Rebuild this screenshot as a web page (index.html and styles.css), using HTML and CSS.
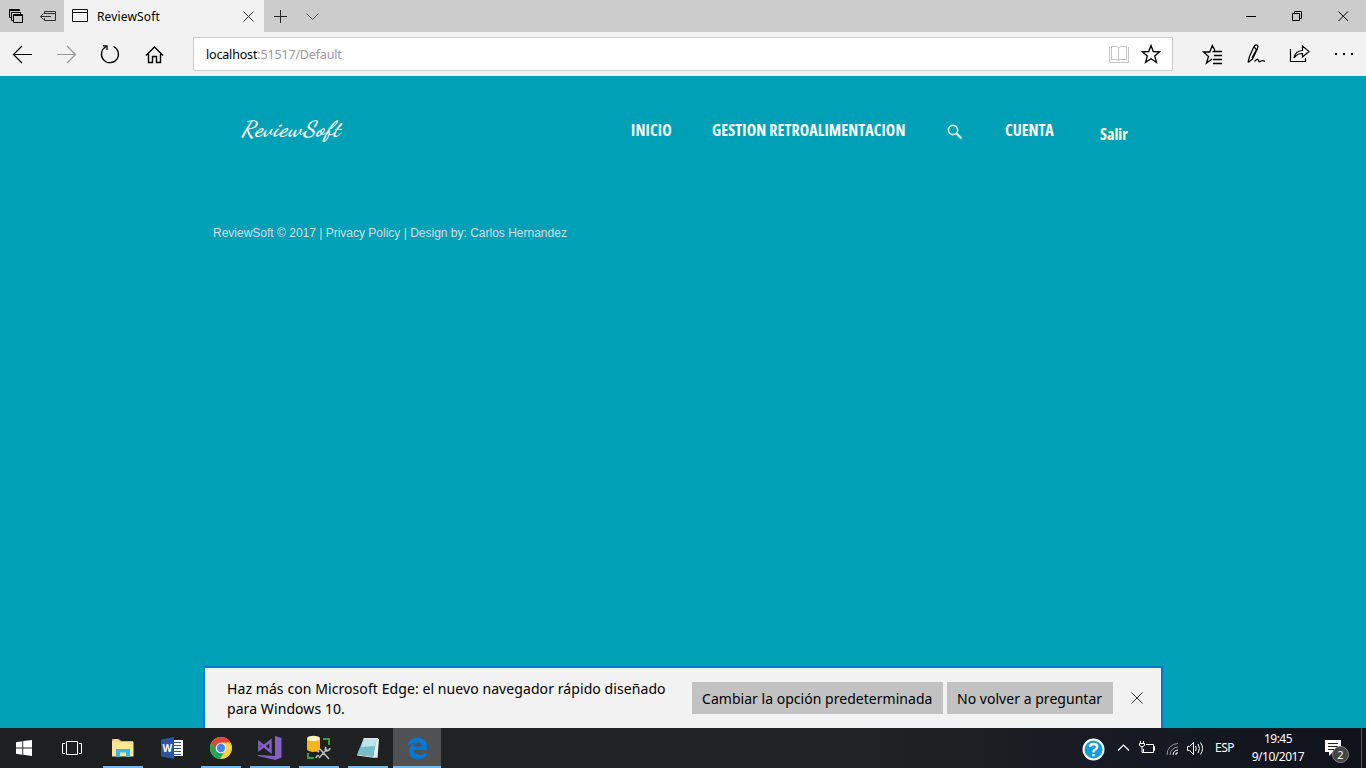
FILE: index.html
```html
<!DOCTYPE html>
<html lang="es">
<head>
<meta charset="utf-8">
<title>ReviewSoft</title>
<link rel="stylesheet" href="styles.css">
</head>
<body>
<div class="screen">
  <div class="titlebar">
    <div class="tab-tools">
      <svg width="64" height="32" fill="none" stroke="#000"><path d="M11 17.500H9.500V9.500H19.500V11M9.500 10.500H19.500M13 20.500H11.500V12.500H20.500V14"/><path d="M13.500 14.500H22.500V22.500H13.500ZM13 15.500H23"/><path stroke="#333" d="M44.500 14V11.500H55.500V20.500H44.500V18M44.500 13.500H55.500M40.500 16.500H51M43.500 13.500L40.500 16.500L43.500 19.500"/></svg>
    </div>
    <div class="tab">
      <svg class="tab-icon" width="17" height="14" fill="none" stroke="#111"><path d="M.5.5H15.500V12.500H.5ZM0 3.500H16"/></svg>
      <span class="tab-title">ReviewSoft</span>
      <svg width="11" height="11" fill="none" stroke="#333"><path d="M.5.5L10.500 10.500M10.500.5L.5 10.500"/></svg>
    </div>
    <svg width="32" height="32" stroke="#222"><path d="M10 16.500H23M16.500 10V23"/></svg>
    <svg width="32" height="32" fill="none" stroke="#555"><path d="M10.500 13.500L16.500 19.500L22.500 13.500"/></svg>
    <div class="window-controls">
      <svg width="46" height="32" stroke="#000"><path d="M18 16.500H28"/></svg>
      <svg width="46" height="32" fill="none" stroke="#000"><path d="M18.500 13.500H25.500V20.500H18.500ZM20.500 13V11.500H27.500V18.500H26"/></svg>
      <svg width="46" height="32" stroke="#000"><path d="M18.500 11.500L28 21M28 11.500L18.500 21"/></svg>
    </div>
  </div>

  <div class="toolbar">
    <div class="nav-buttons">
      <svg width="44" height="44" fill="none" stroke="#000" stroke-width="1.200"><path d="M32 22.500H13.500M22 14L13.500 22.500L22 31"/></svg>
      <svg width="44" height="44" fill="none" stroke="#999" stroke-width="1.200"><path d="M13 22.500H31.500M23 14L31.500 22.500L23 31"/></svg>
      <svg width="44" height="44" fill="none" stroke="#000" stroke-width="1.300"><path d="M25.500 14.500A8.500 8.500 0 1 1 17.800 14.800M15 13.800H19V18"/></svg>
      <svg width="44" height="44" fill="none" stroke="#000" stroke-width="1.400"><path d="M14 23.500L22.500 15L31 23.500M16.500 22V30.500H20.500V24.500H24.500V30.500H28.500V22"/></svg>
    </div>
    <div class="address">
      <span class="url"><b>localhost</b>:51517/Default</span>
      <svg width="20" height="18" fill="none" stroke="#c5c5c5"><path d="M2.500 1.500H7Q9.500 1.500 9.500 3.500Q10 1.500 12 1.500H17.500V14.500H11.500Q9.500 14.500 9.500 16Q9 14.500 7 14.500H2.500ZM9.500 3V16M.5 2V17.500H19.500V2"/></svg>
      <svg class="star" width="20" height="20" fill="none" stroke="#000" stroke-width="1.300"><path d="M10 1.500L12.300 7.500L18.700 7.800L13.700 12L15.500 18.400L10 14.700L4.500 18.400L6.300 12L1.300 7.800L7.700 7.500Z"/></svg>
    </div>
    <div class="tool-buttons">
      <svg width="44" height="44" fill="none" stroke="#000" stroke-width="1.300"><path d="M25 18.500L22.300 13.500L19.700 20H13.500L18.500 24.500L16.500 31L22 27M22.500 19.500H32M24 23.500H32M23 27.500H32M23 31.500H32"/></svg>
      <svg width="44" height="44" fill="none" stroke="#000" stroke-width="1.200"><path d="M14 30.500L15.500 24.500L20 14.500Q22 11.500 24 14L23.300 17L18.500 27L14 30.500M20 15L22.500 17.500L18 26M20.500 29.500Q24 25.800 24.500 28.500Q25 30.800 27 29Q29 28 31 29.500"/></svg>
      <svg width="44" height="44" fill="none" stroke="#000" stroke-width="1.200"><path d="M12.500 17V29.500H27.500V26M12 29.500H28M16 26Q17 19 24.500 18.500V14L31 19.500L24.500 25V21.500Q19 21.500 16 26Z"/></svg>
      <svg width="44" height="44" fill="#000"><path d="M13 21h2v2h-2zM21 21h2v2h-2zM29 21h2v2h-2z"/></svg>
    </div>
  </div>

  <main class="page">
    <header class="site-header">
      <div class="logo">ReviewSoft</div>
      <nav class="site-nav">
        <a class="inicio">INICIO</a>
        <a class="gestion">GESTION RETROALIMENTACION</a>
        <svg class="search" width="16" height="16" fill="none" stroke="#d5f0f4"><circle cx="6" cy="6" r="4.600" stroke-width="1.600"/><path d="M9.300 9.300L14.500 14.500" stroke-width="2.300"/></svg>
        <a class="cuenta">CUENTA</a>
        <a class="salir">Salir</a>
      </nav>
    </header>
    <footer class="site-footer">ReviewSoft © 2017 | Privacy Policy | Design by: Carlos Hernandez</footer>
    <div class="notice">
      <p class="notice-text">Haz más con Microsoft Edge: el nuevo navegador rápido diseñado<br>para Windows 10.</p>
      <span class="btn btn-change">Cambiar la opción predeterminada</span>
      <span class="btn btn-never">No volver a preguntar</span>
      <svg class="notice-close" width="12" height="12" stroke="#333"><path d="M.5.5L11.500 11.500M11.500.5L.5 11.500"/></svg>
    </div>
  </main>

  <div class="taskbar">
    <div class="apps">
      <div class="app"><svg width="48" height="40" fill="#fff"><path d="M16 14.200L22.300 13.300V19.500H16ZM23.200 13.100L32 12V19.500H23.200ZM16 20.400H22.300V26.700L16 25.800ZM23.200 20.400H32V28L23.200 26.800Z"/></svg></div>
      <div class="app"><svg width="48" height="40" fill="none" stroke="#fff"><path d="M18.500 13.500H29.500V26.500H18.500ZM17 15.500H14.500V25.500H17M31 15.500H33.500V25.500H31"/></svg></div>
      <div class="app open"><svg width="48" height="40"><path fill="#e9b83d" d="M13 11H20L22 13H34V16H13Z"/><path fill="#ffe498" d="M13 13H20L22 14H34.500V28.500H13Z"/><path fill="#3bb5e8" d="M17 21H31V29H27V24.500H21V29H17Z"/><path fill="#fff" d="M15 11.500h4v1h-4z"/></svg></div>
      <div class="app"><svg width="48" height="40"><path fill="#fff" d="M24 12H35V28H24Z"/><path stroke="#2b579a" d="M25 14.500H33M25 17.500H33M25 20.500H33M25 23.500H33M25 26.500H33"/><path fill="#2b579a" d="M13 11.500L26 9V31L13 28.500Z"/><text class="word-mark" x="14.500" y="24">W</text></svg></div>
      <div class="app open"><svg width="48" height="40"><circle cx="24" cy="20" r="11" fill="#fdd23e"/><path fill="#e44436" d="M14.400 14.600A11 11 0 0 1 33.600 14.600H24L19 23Z"/><path fill="#20a85a" d="M14.400 14.600A11 11 0 0 0 23 31L28.500 22L24 25L19.300 22.700Z"/><circle cx="24" cy="20" r="5.300" fill="#fff"/><circle cx="24" cy="20" r="4.200" fill="#4385ec"/></svg></div>
      <div class="app open"><svg width="48" height="40" fill="none"><path stroke="#865fc5" stroke-width="2.400" d="M13.300 14.500V21.500L24.500 13V23.500Z"/><path fill="#865fc5" d="M29 8L35.500 10V29.500L29.500 32L12 28V27L29 28Z"/></svg></div>
      <div class="app open"><svg width="48" height="40"><path fill="#f7b51c" d="M12 11V22Q18 26 25 22V11Z"/><ellipse cx="18.500" cy="10.500" rx="6.500" ry="2.700" fill="#fff0be"/><path fill="none" stroke="#3f9c49" stroke-width="2" d="M28 11H34V17M13 25V30H19"/><path fill="none" stroke="#bbb" stroke-width="1.600" d="M24 30L32 21M25 21L34 31M21 22L24 24M31 19Q29 22 32 23Q35 22 35 20M21 30Q22 27 24 28"/></svg></div>
      <div class="app open"><svg width="48" height="40"><path fill="#e8eff0" d="M32 10L35 11L33.500 30L29 29Z"/><path fill="#75bfca" d="M19.500 11L33 10.500L29 29L13 26.500Z"/><path fill="#bce5eb" d="M19.500 11L33 10.500L31 18L17 19Z"/><path stroke="#dce6e8" d="M19.500 10.500L34 10.500M13 27L31 29.500"/></svg></div>
      <div class="app open active"><svg width="48" height="40"><path fill="#0078d7" d="M14 19Q15.500 10 24.500 9.700Q34 10 34 20V22H20.500Q21 26.500 26 26.700Q30 26.700 33 25V29Q29.500 31 25 31Q16.500 31 16 23Q16.500 18 22 14.500Q17 15 14 19ZM20.500 18.500H28.500Q28.500 14.200 24.500 14.200Q21 14.500 20.500 18.500Z"/></svg></div>
    </div>
    <div class="tray">
      <svg width="132" height="40" fill="none" stroke="#fff"><circle cx="13.500" cy="21.500" r="10" fill="#159cdb" stroke-width="2"/><path stroke-width="2.400" d="M10 19Q10 16 13.500 16Q17.200 16 17.200 19Q17 21 14.500 22Q13.500 22.700 13.500 24.500M13.500 26V28.200"/><path stroke-width="1.200" d="M38 22.500L43.500 17L49 22.500"/><path d="M66 16.500H73.500V24.500H63.500V21M74 18.500H74.500V22.500H74M59.500 15.500H64.500V17.500Q62 20.500 59.500 17.500ZM60.500 13V15M63.500 13V15M62 19V24.500H64"/><path stroke="#999" d="M87 27A11 11 0 0 1 98 15.500M90 27A8 8 0 0 1 98 19"/><path d="M93 27A5 5 0 0 1 98 22M96 27V25H98"/><path d="M107.500 18.500H109.500L113.500 14.500V26.500L109.500 22.500H107.500ZM115.500 18Q117 20.500 115.500 23M118 16Q121 20.500 118 25M120.500 14.500Q124.500 20.500 120.500 26.500"/></svg>
      <span class="lang">ESP</span>
      <div class="clock"><span>19:45</span><span>9/10/2017</span></div>
      <div class="action-center">
        <svg width="24" height="28"><path fill="#fff" d="M1 2H17V14H9L5 18V14H1Z"/><path stroke="#222" d="M4 5.500H14M4 8.500H14M4 11.500H10"/></svg>
        <span class="badge">2</span>
      </div>
      <div class="show-desktop"></div>
    </div>
  </div>
</div>
</body>
</html>
```
FILE: styles.css
```css
* { box-sizing: border-box; }
body { margin: 0; overflow: hidden; font-family: "Noto Sans", "Open Sans", sans-serif; }
svg { display: block; flex: none; }
.screen { width: 1366px; height: 768px; display: flex; flex-direction: column; }

.titlebar { height: 32px; display: flex; background: #ccc; }
.tab-tools { width: 64px; }
.tab { width: 200px; display: flex; align-items: center; background: #f2f2f2; padding: 0 10px 0 8px; }
.tab-title { flex: 1; padding-left: 8px; font-size: 12px; letter-spacing: .15px; }
.window-controls { display: flex; margin-left: auto; }

.toolbar { height: 44px; display: flex; background: #f2f2f2; }
.nav-buttons, .tool-buttons { display: flex; }
.address { width: 980px; height: 34px; margin: 5px 17px 0 17px; border: 1px solid #ccc; background: #fff; display: flex; align-items: center; padding: 0 11px 0 12px; white-space: nowrap; }
.url { flex: 1; font-size: 12.500px; letter-spacing: -.17px; color: #999; }
.url b { font-weight: 400; color: #000; }
.star { margin-left: 12px; }

.page { flex: 1; background: #00a0b6; display: flex; flex-direction: column; align-items: center; }
.site-header { width: 940px; height: 110px; padding: 42px 0 0 28px; display: flex; color: #fff; white-space: nowrap; }
.logo { width: 390px; font: italic bold 22px/22px "Dancing Script", "Z003", "URW Chancery L", cursive; letter-spacing: .9px; }
.site-nav { display: flex; font: bold 16px/24px "Open Sans", sans-serif; font-stretch: 75%; }
.inicio { width: 81px; letter-spacing: .15px; }
.gestion { width: 235px; letter-spacing: .1px; }
.search { margin-top: 6px; }
.cuenta { width: 95px; margin-left: 42px; }
.salir { color: #ffc; padding-top: 4px; }
.site-footer { width: 940px; padding-top: 40px; font: 12px/14px "Liberation Sans", Arial, sans-serif; color: #d8dddf; }
.notice { width: 960px; height: 62px; margin-top: auto; border: 2px solid #0078d7; border-bottom: 0; background: #f2f2f2; display: flex; align-items: center; padding-left: 22px; white-space: nowrap; }
.notice-text { width: 465px; margin: 1px 0 0; font-size: 14px; line-height: 20px; letter-spacing: .08px; }
.btn { height: 32px; background: #c2c2c2; font-size: 14px; line-height: 33px; padding-left: 10px; letter-spacing: .03px; }
.btn-change { width: 251px; }
.btn-never { width: 166px; margin-left: 4px; }
.notice-close { margin-left: 18px; }

.taskbar { height: 40px; display: flex; justify-content: space-between; background: linear-gradient(90deg, #1e1f21, #222324 60%, #151922 85%, #10131c); color: #fff; }
.apps { display: flex; gap: 1px; }
.app { width: 48px; height: 40px; }
.app:first-child { margin-right: -1px; }
.app:nth-child(2) { margin-right: 2px; }
.open { background: linear-gradient(#76b9ed, #76b9ed) center bottom / 40px 2px no-repeat; }
.active { background: linear-gradient(#76b9ed, #76b9ed) bottom / 48px 2px no-repeat #505153; }
.word-mark { font: bold 10px "Open Sans", sans-serif; fill: #fff; }
.tray { width: 286px; display: flex; font-size: 12px; white-space: nowrap; }
.lang { width: 32px; margin-left: 3px; line-height: 40px; font-size: 12px; letter-spacing: -.5px; }
.clock { width: 62px; display: flex; flex-direction: column; align-items: center; line-height: 18px; padding-top: 2px; font-size: 12px; letter-spacing: -.5px; }
.action-center { position: relative; margin: 10px 0 0 15px; }
.badge { position: absolute; left: 8px; top: 8px; width: 17px; height: 17px; border: 1px solid #888; border-radius: 50%; background: #444; font-size: 11px; line-height: 15px; text-align: center; }
.show-desktop { width: 1px; margin-left: 13px; background: #555; }
```
